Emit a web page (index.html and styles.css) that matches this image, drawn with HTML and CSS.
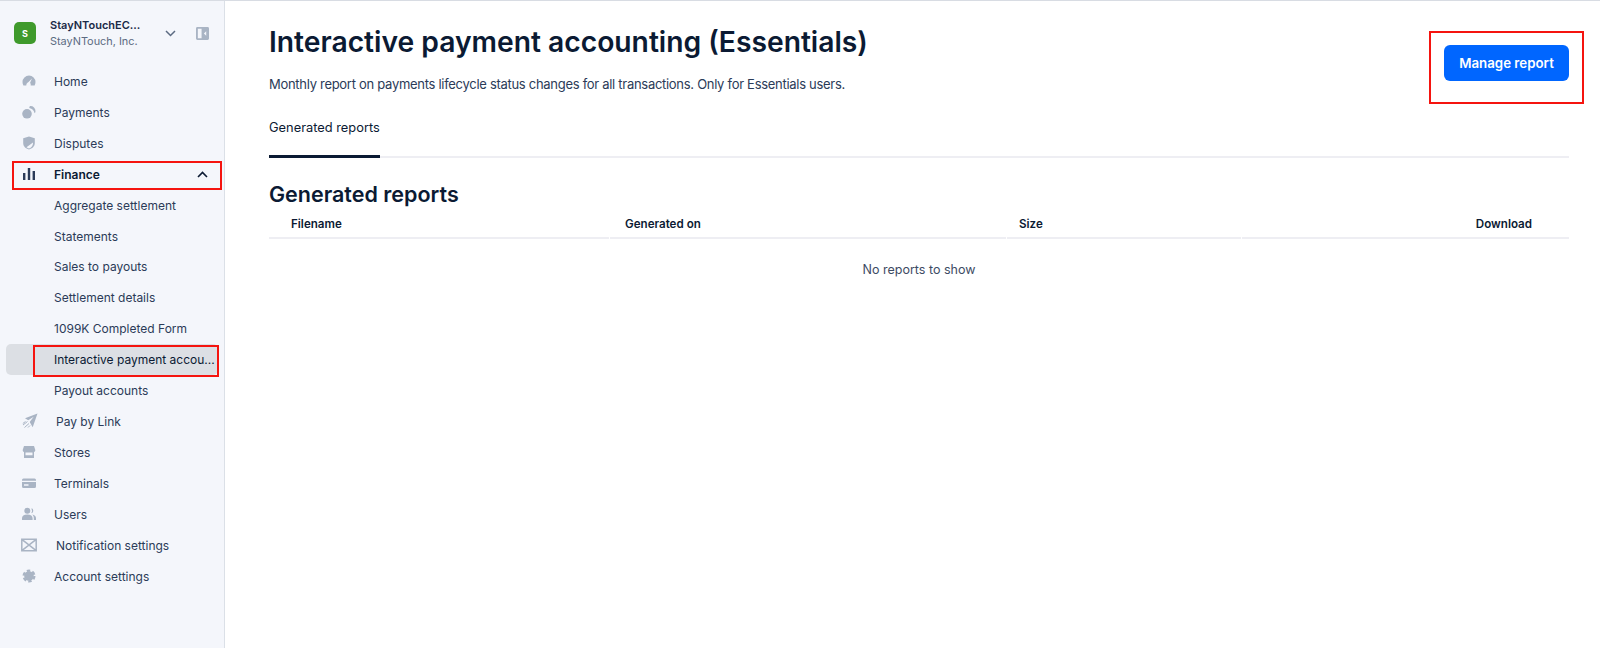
FILE: index.html
```html
<!DOCTYPE html>
<html lang="en">
<head>
    <meta charset="UTF-8">
    <meta name="viewport" content="width=device-width, initial-scale=1.0">
    <title>Interactive payment accounting</title>
    <link rel="stylesheet" href="styles.css">
</head>
<body>
    <div class="app">
        <aside class="sidebar">
            <div class="account">
                <div class="account-badge">S</div>
                <div class="account-text">
                    <div class="account-name">StayNTouchEC...</div>
                    <div class="account-company">StayNTouch, Inc.</div>
                </div>
                <svg class="account-chevron" width="11" height="7" viewBox="0 0 11 7"><path d="M1 1l4.500 4.500L10 1" fill="none" stroke="#5c6b82" stroke-width="1.500"/></svg>
                <svg class="account-collapse" width="13" height="13" viewBox="0 0 14 14"><path fill="#a9b4c4" d="M1.500 0h11A1.500 1.500 0 0 1 14 1.500v11a1.500 1.500 0 0 1-1.500 1.500h-11A1.500 1.500 0 0 1 0 12.500v-11A1.500 1.500 0 0 1 1.500 0zM2 2v10h4V2zm9 2.500L8.500 7l2.500 2.500z" fill-rule="evenodd"/></svg>
            </div>

            <nav class="nav">
                <a class="nav-item">
                    <svg class="nav-icon" viewBox="0 0 14 14"><path d="M7 1.500A6.500 6.500 0 0 0 .5 8c0 1.300.3 2.500.9 3.500h2.900c-.1-1.500.7-2.800 2.200-3.500L10 4.500 8.100 8.700c.6.800.8 1.800.6 2.800h3.900c.6-1 .9-2.200.9-3.500A6.500 6.500 0 0 0 7 1.500z"/></svg>
                    <span>Home</span>
                </a>
                <a class="nav-item">
                    <svg class="nav-icon" viewBox="0 0 14 14"><circle cx="5" cy="8.800" r="4.800"/><path d="M8.200 1a5 5 0 0 1 5.300 5.200 3 3 0 0 1-.9 2.100A7 7 0 0 0 7.300 3 2 2 0 0 1 8.200 1z"/></svg>
                    <span>Payments</span>
                </a>
                <a class="nav-item">
                    <svg class="nav-icon" viewBox="0 0 14 14"><path fill-rule="evenodd" d="M7 .5l5.800 1.800v4.900c0 3.100-2.500 5.300-5.800 6.300-3.300-1-5.800-3.200-5.800-6.300V2.300zM11 6.500 4.500 11.300c.8.600 1.600 1 2.500 1.200 2.300-.8 4-2.600 4-5.300z"/></svg>
                    <span>Disputes</span>
                </a>
                <a class="nav-item nav-open">
                    <svg class="nav-icon" viewBox="0 0 14 14"><path d="M1 6h2.400v7H1zM5.800 1h2.400v12H5.800zM10.600 4H13v9h-2.400z"/></svg>
                    <span>Finance</span>
                    <svg class="nav-caret" width="11" height="7" viewBox="0 0 11 7"><path d="M1 6l4.500-4.500L10 6" fill="none" stroke="#0b1a33" stroke-width="1.600"/></svg>
                </a>
                <a class="nav-item">Aggregate settlement</a>
                <a class="nav-item">Statements</a>
                <a class="nav-item">Sales to payouts</a>
                <a class="nav-item">Settlement details</a>
                <a class="nav-item">1099K Completed Form</a>
                <a class="nav-item nav-active">Interactive payment accou...</a>
                <a class="nav-item">Payout accounts</a>
                <a class="nav-item nav-wide">
                    <svg class="nav-icon nav-icon-plane" viewBox="0 0 16 15">
                        <path d="M15.500.5 3 5.300l3.200 2 5.500-3.500L7.700 9l3 5.300z"/>
                        <path d="M5.500 8.500 1 12M7 10.500 2.500 14.500M3.500 8.500.8 10.500M8 12.500l-2 2" fill="none" stroke="#a9b4c4" stroke-width="1"/>
                    </svg>
                    <span>Pay by Link</span>
                </a>
                <a class="nav-item">
                    <svg class="nav-icon" viewBox="0 0 14 14"><path fill-rule="evenodd" d="M2 1h10l1.300 4c0 1-.4 1.700-1.300 2v6H2V7C1.100 6.700.7 6 .7 5zM3.500 7.400v2.800h7V7.400z"/></svg>
                    <span>Stores</span>
                </a>
                <a class="nav-item">
                    <svg class="nav-icon" viewBox="0 0 14 14"><path fill-rule="evenodd" d="M1.500 2.500h11A1.500 1.500 0 0 1 14 4v.800H0V4a1.500 1.500 0 0 1 1.500-1.500zM0 6h14v4.500a1.500 1.500 0 0 1-1.500 1.500h-11A1.500 1.500 0 0 1 0 10.500zM2 8.300v1.400h4.500V8.300z"/></svg>
                    <span>Terminals</span>
                </a>
                <a class="nav-item">
                    <svg class="nav-icon" viewBox="0 0 14 14"><circle cx="5.300" cy="3.800" r="3"/><path d="M0 13v-1.800c0-2 1.800-3.700 5.300-3.700s5.300 1.700 5.300 3.700V13zM9.300 1.300a2.500 2.500 0 0 1 0 4.900 5 5 0 0 0 0-4.900zM10.300 7.600c2 .4 3.700 1.600 3.700 3.400V13h-2.200v-1.800c0-1.500-.6-2.600-1.500-3.600z"/></svg>
                    <span>Users</span>
                </a>
                <a class="nav-item nav-wide">
                    <svg class="nav-icon nav-icon-mail" viewBox="0 0 16 13"><path fill="none" stroke="#a9b4c4" stroke-width="1.500" d="M.8.800h14.400v11.400H.8zM.8.800 15.200 12.200M15.200.800.800 12.200"/></svg>
                    <span>Notification settings</span>
                </a>
                <a class="nav-item">
                    <svg class="nav-icon" viewBox="0 0 14 14"><circle cx="7" cy="7" r="4.800"/><circle cx="7" cy="7" r="5.400" fill="none" stroke="#a9b4c4" stroke-width="2.200" stroke-dasharray="3.400 2.254"/></svg>
                    <span>Account settings</span>
                </a>
            </nav>
        </aside>

        <main class="main">
            <div class="page-head">
                <div>
                    <h1>Interactive payment accounting (Essentials)</h1>
                    <p class="page-desc">Monthly report on payments lifecycle status changes for all transactions. Only for Essentials users.</p>
                </div>
                <button class="btn-primary">Manage report</button>
            </div>

            <div class="tabs">
                <div class="tab">Generated reports</div>
            </div>

            <h2>Generated reports</h2>
            <table class="reports">
                <thead>
                    <tr>
                        <th class="col-file">Filename</th>
                        <th class="col-date">Generated on</th>
                        <th class="col-size">Size</th>
                        <th class="col-dl">Download</th>
                    </tr>
                </thead>
                <tbody>
                    <tr><td colspan="4">No reports to show</td></tr>
                </tbody>
            </table>
        </main>
    </div>

    <!-- red annotation boxes from the screenshot -->
    <div class="mark mark-finance"></div>
    <div class="mark mark-active"></div>
    <div class="mark mark-manage"></div>
</body>
</html>
```

FILE: styles.css
```css
* {
    box-sizing: border-box;
}
html, body {
    margin: 0;
    height: 100%;
    overflow: hidden;
}
body {
    font-family: 'Inter', 'Liberation Sans', sans-serif;
    background-color: #fff;
    color: #0b1a33;
    border-top: 1px solid #d8dce3;
}
.app {
    display: flex;
    height: 100%;
}

/* Sidebar */
.sidebar {
    width: 225px;
    flex-shrink: 0;
    background: #f4f6fb;
    border-right: 1px solid #dbe0e7;
    padding: 18px 0 0 6px;
}
.account {
    display: flex;
    align-items: center;
    height: 28px;
    padding-left: 8px;
    margin-bottom: 19px;
}
.account-badge {
    width: 22px;
    height: 22px;
    border-radius: 5px;
    background: #3f9a2c;
    color: #fff;
    font-size: 9px;
    font-weight: 700;
    display: flex;
    align-items: center;
    justify-content: center;
}
.account-text {
    margin-left: 14px;
    width: 112px;
    font-size: 11px;
    line-height: 16px;
}
.account-name {
    font-weight: 600;
    color: #1a2a47;
}
.account-company {
    font-size: 10.900px;
    color: #5c6b82;
}
.account-chevron {
    margin-left: 3px;
}
.account-collapse {
    margin-left: 20px;
}
.nav {
    display: flex;
    flex-direction: column;
}
.nav-item {
    display: flex;
    align-items: center;
    height: 30.930px;
    width: 212px;
    padding-left: 48px;
    font-size: 12px;
    color: #2b3b58;
    border-radius: 5px;
    position: relative;
}
.nav-icon {
    position: absolute;
    left: 16px;
    top: 8px;
    width: 14px;
    height: 14px;
    fill: #a9b4c4;
}
.nav-wide {
    padding-left: 50px;
}
.nav-icon-plane {
    left: 16px;
    top: 7px;
    width: 16px;
    height: 15px;
}
.nav-icon-mail {
    left: 15px;
    width: 16px;
}
.nav-open {
    color: #0b1a33;
    font-weight: 600;
}
.nav-open .nav-icon {
    fill: #2b3b58;
}
.nav-caret {
    position: absolute;
    right: 10px;
    top: 12px;
}
.nav-active {
    background: #dcdfe4;
    color: #0b1a33;
}

/* Main */
.main {
    flex: 1;
    padding: 0 31px 0 44px;
}
.page-head {
    display: flex;
    justify-content: space-between;
    align-items: flex-start;
    padding-top: 21px;
}
h1 {
    margin: 0;
    font-size: 28.240px;
    line-height: 40px;
    font-weight: 600;
}
.page-desc {
    margin: 12px 0 0;
    font-size: 13px;
    letter-spacing: -0.290px;
    line-height: 20px;
    color: #2b3b58;
}
.btn-primary {
    margin-top: 23px;
    width: 125px;
    height: 36px;
    border: none;
    border-radius: 6px;
    background-color: #0066ff;
    color: #fff;
    font-family: inherit;
    font-size: 13.300px;
    font-weight: 600;
}
.tabs {
    margin-top: 16px;
    height: 47.500px;
    border-bottom: 2px solid #eeeef3;
}
.tab {
    width: 111px;
    height: 47.500px;
    padding-top: 9px;
    font-size: 12.850px;
    line-height: 18px;
    border-bottom: 3px solid #0b1a33;
}
h2 {
    margin: 23.500px 0 0;
    font-size: 21.500px;
    line-height: 26px;
    font-weight: 600;
}

/* Report table, cells keep a 1px gap in the header rule */
.reports {
    table-layout: fixed;
    width: calc(100% + 2px);
    margin: 4px 0 0 -1px;
    border-collapse: separate;
    border-spacing: 1px 0;
}
.reports th {
    font-size: 11.600px;
    font-weight: 600;
    text-align: left;
    height: 28px;
    border-bottom: 2px solid #eeeef3;
    padding: 0;
}
.reports .col-file {
    width: 340px;
    padding-left: 22px;
}
.reports .col-date {
    width: 396px;
    padding-left: 15px;
}
.reports .col-size {
    width: 234px;
    padding-left: 12px;
}
.reports .col-dl {
    text-align: right;
    padding-right: 37px;
}
.reports td {
    text-align: center;
    font-size: 12.500px;
    color: #3d4b63;
    padding: 23px 0;
}

/* Red annotation boxes */
.mark {
    position: absolute;
    border: 2px solid #f5140f;
}
.mark-finance {
    left: 12px;
    top: 161px;
    width: 210px;
    height: 29px;
}
.mark-active {
    left: 33px;
    top: 345px;
    width: 186px;
    height: 32px;
}
.mark-manage {
    left: 1429px;
    top: 31px;
    width: 155px;
    height: 73px;
}
```
